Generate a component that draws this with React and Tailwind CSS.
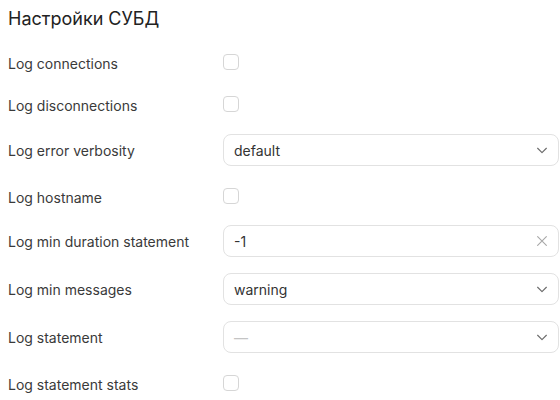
import React, { useState } from 'react';

const font = { fontFamily: 'Inter, "Noto Sans", sans-serif' };

function Checkbox({ checked, onChange }) {
    return (
        <button
            onClick={() => onChange(!checked)}
            className="w-[16px] h-[16px] rounded-[4px] border border-[#d6d6d6] bg-white"
        />
    );
}

function Chevron() {
    return (
        <svg width="14" height="14" viewBox="0 0 16 16" fill="none">
            <path d="M3 6l5 5 5-5" stroke="#6b6b6b" strokeWidth="1.3" strokeLinecap="round" strokeLinejoin="round" />
        </svg>
    );
}

function Cross() {
    return (
        <svg width="14" height="14" viewBox="0 0 16 16" fill="none">
            <path d="M3 3l10 10M13 3L3 13" stroke="#a8a8a8" strokeWidth="1.3" strokeLinecap="round" />
        </svg>
    );
}

function Select({ value, placeholder }) {
    return (
        <div className="flex items-center h-[32px] pl-[10px] pr-[9px] rounded-[8px] border border-[#e2e2e2] bg-white">
            <span className={`flex-1 text-[14px] ${value ? 'text-[#333]' : 'text-[#c4c4c4]'}`}>
                {value || placeholder}
            </span>
            <Chevron />
        </div>
    );
}

function TextInput({ value, onChange }) {
    return (
        <div className="flex items-center h-[32px] pl-[10px] pr-[9px] rounded-[8px] border border-[#e2e2e2] bg-white">
            <input
                value={value}
                onChange={(e) => onChange(e.target.value)}
                className="flex-1 text-[14px] text-[#333] outline-none bg-transparent"
                style={font}
            />
            <button onClick={() => onChange('')} className="flex items-center">
                <Cross />
            </button>
        </div>
    );
}

export default function App() {
    const [checks, setChecks] = useState({ connections: false, disconnections: false, hostname: false, stats: false });
    const [duration, setDuration] = useState('-1');

    const toggle = (key) => (v) => setChecks({ ...checks, [key]: v });

    // checkbox rows are a bit lower after an input row
    const rows = [
        { label: 'Log connections', el: <Checkbox checked={checks.connections} onChange={toggle('connections')} />, cls: 'h-[26px]' },
        { label: 'Log disconnections', el: <Checkbox checked={checks.disconnections} onChange={toggle('disconnections')} />, cls: 'h-[26px]' },
        { label: 'Log error verbosity', el: <Select value="default" />, cls: 'h-[32px]' },
        { label: 'Log hostname', el: <Checkbox checked={checks.hostname} onChange={toggle('hostname')} />, cls: 'h-[26px] mt-[2px] mb-[-1px]' },
        { label: 'Log min duration statement', el: <TextInput value={duration} onChange={setDuration} />, cls: 'h-[32px]' },
        { label: 'Log min messages', el: <Select value="warning" />, cls: 'h-[32px]' },
        { label: 'Log statement', el: <Select placeholder="—" />, cls: 'h-[32px]' },
        { label: 'Log statement stats', el: <Checkbox checked={checks.stats} onChange={toggle('stats')} />, cls: 'h-[26px] mt-[2px]' },
    ];

    return (
        <div className="w-[560px] h-[400px] overflow-hidden bg-white pl-[8px] pr-[1px]" style={font}>
            <h2 className="text-[18px] leading-[24px] font-normal text-[#222] pt-[7px] mb-[19px]">Настройки СУБД</h2>
            <div className="flex flex-col gap-4">
                {rows.map((row) => (
                    <div key={row.label} className={`flex items-center ${row.cls}`}>
                        <div className="w-[215px] shrink-0 text-[14px] text-[#3a3a3a]">{row.label}</div>
                        <div className="flex-1">{row.el}</div>
                    </div>
                ))}
            </div>
        </div>
    );
}
